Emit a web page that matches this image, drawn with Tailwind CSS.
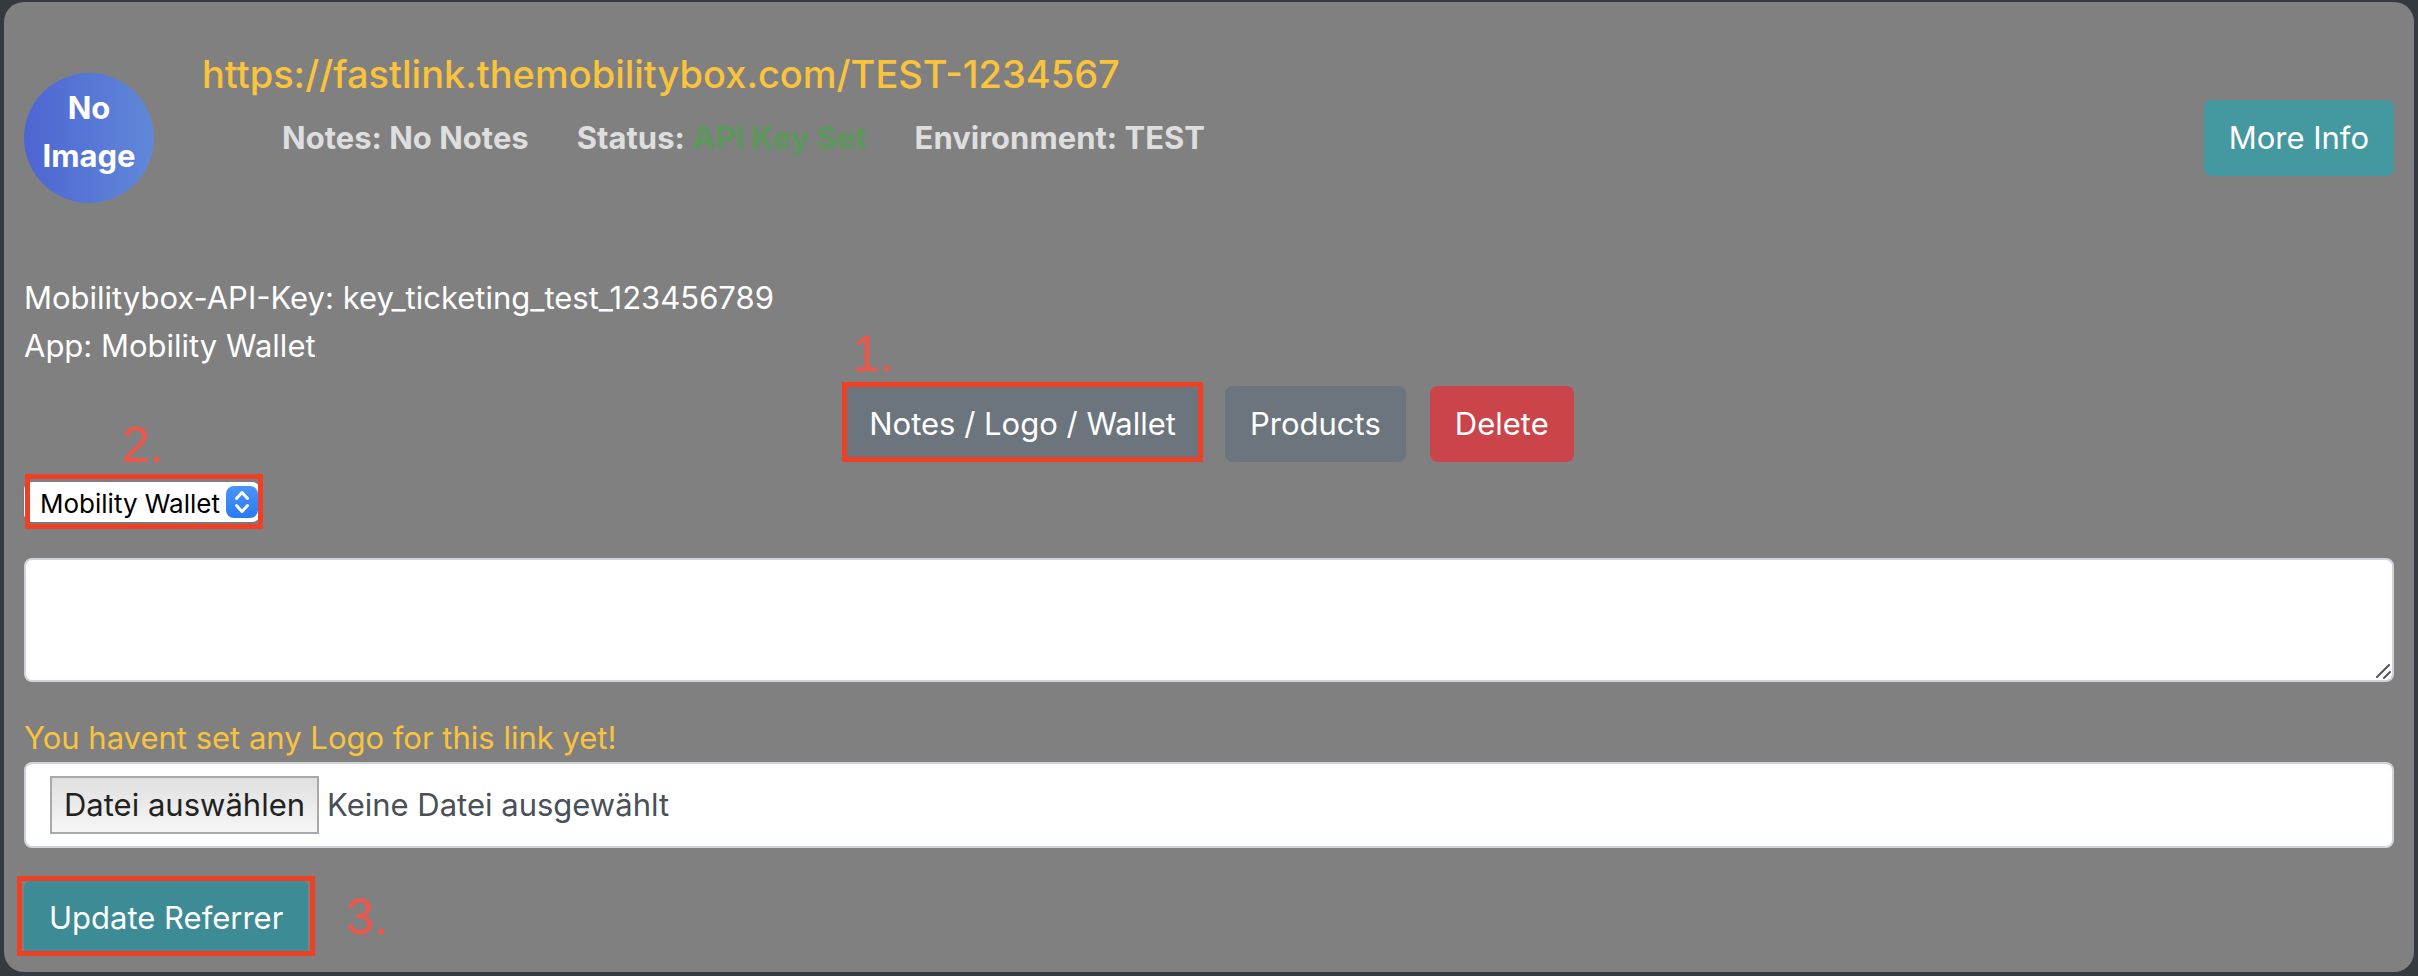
<!DOCTYPE html>
<html lang="de">
<head>
  <meta charset="utf-8">
  <meta name="viewport" content="width=device-width, initial-scale=1">
  <title>Fastlink Referrer</title>
  <script src="https://cdn.jsdelivr.net/npm/@tailwindcss/browser@4"></script>
</head>
<body class="bg-[#343a40] px-1 pt-[2px] pb-1 font-['Inter',sans-serif] text-[31px] leading-[48px] text-white">
  <main class="rounded-[20px] bg-[#808080] px-5 pt-5 pb-4">

    <header class="flex min-h-[232px] items-center">
      <div class="flex size-[130px] shrink-0 flex-col items-center justify-center rounded-full bg-linear-to-r from-[#4e65d2] to-[#6088d8] pb-3 text-center font-bold">
        <span>No</span>
        <span>Image</span>
      </div>
      <div class="ml-12 self-start pt-7">
        <h2 class="text-[38px] font-medium"><a href="#" class="text-[#fac33c]">https://fastlink.themobilitybox.com/TEST-1234567</a></h2>
        <div class="mt-4 ml-20 flex gap-12 font-bold text-[#dedede]">
          <span>Notes: No Notes</span>
          <span>Status: <span class="text-[#5b985b]">API Key Set</span></span>
          <span>Environment: TEST</span>
        </div>
      </div>
      <button type="button" class="ml-auto h-[76px] rounded-lg bg-[#4498a0] px-[25px]">More Info</button>
    </header>

    <section class="mt-5">
      <p>Mobilitybox-API-Key: key_ticketing_test_123456789</p>
      <p>App: Mobility Wallet</p>
    </section>

    <nav class="mt-4 flex justify-center gap-6">
      <div class="relative">
        <button type="button" class="h-[76px] rounded-lg bg-[#6c757d] px-[25px]">Notes / Logo / Wallet</button>
        <div class="pointer-events-none absolute -inset-x-[2px] -top-1 bottom-0 border-[5px] border-[#ee4025]"></div>
        <span class="absolute -top-[56px] left-2 font-['Liberation_Sans',sans-serif] text-[50px] text-[#f0554a]">1.</span>
      </div>
      <button type="button" class="h-[76px] rounded-lg bg-[#6c757d] px-[25px]">Products</button>
      <button type="button" class="h-[76px] rounded-lg bg-[#cb444a] px-[25px]">Delete</button>
    </nav>

    <form class="mt-5">
      <div class="relative w-fit">
        <select aria-label="App" class="block h-10 w-[236px] appearance-none rounded-lg bg-white pt-1 pl-4 text-[26px] leading-9 text-black shadow-sm">
          <option>Mobility Wallet</option>
        </select>
        <svg class="pointer-events-none absolute top-1 right-[2px] size-8" viewBox="0 0 32 32" fill="none">
          <defs>
            <linearGradient id="arrows" x1="0" y1="0" x2="0" y2="1">
              <stop stop-color="#4a95f8"/>
              <stop offset="1" stop-color="#2a7af6"/>
            </linearGradient>
          </defs>
          <rect width="32" height="32" rx="8" fill="url(#arrows)"/>
          <path d="M10.500 12.500L16 6.500l5.500 6M10.500 19.500l5.500 6 5.500-6" stroke="#fff" stroke-width="3" stroke-linecap="round" stroke-linejoin="round"/>
        </svg>
        <div class="pointer-events-none absolute -top-2 -right-[3px] -bottom-[7px] left-[1px] border-[5px] border-[#ee4025]"></div>
        <span class="absolute -top-[61px] left-[98px] font-['Liberation_Sans',sans-serif] text-[50px] text-[#f0554a]">2.</span>
      </div>

      <div class="relative mt-9">
        <textarea aria-label="Notes" class="block h-[124px] w-full resize-none rounded-lg border-2 border-[#ced4da] bg-white px-6 py-3 text-[#495057]"></textarea>
        <svg class="pointer-events-none absolute right-[3px] bottom-[3px] size-4" viewBox="0 0 16 16" stroke="#555" stroke-width="2" stroke-linecap="round">
          <path d="M2 14L14 2M9 15l6-6"/>
        </svg>
      </div>

      <p class="mt-8 text-[#fac33c]">You havent set any Logo for this link yet!</p>
      <div class="flex h-[86px] items-center rounded-lg border-2 border-[#ced4da] bg-white pl-6 text-[#495057]">
        <input type="file" id="logo" class="sr-only">
        <label for="logo" class="flex items-center gap-2">
          <span class="flex h-[58px] items-center border-2 border-[#a9a9a9] bg-linear-to-b from-[#e0e0e0] to-[#f6f6f6] px-3 text-[#222]">Datei auswählen</span>
          <span>Keine Datei ausgewählt</span>
        </label>
      </div>

      <div class="relative mt-8 w-fit">
        <button type="submit" class="block h-[76px] rounded-lg bg-[#3d8b94] px-[25px]">Update Referrer</button>
        <div class="pointer-events-none absolute -inset-x-[7px] -top-1 bottom-0 border-[5px] border-[#ee4025]"></div>
        <span class="absolute top-[13px] left-full ml-[38px] font-['Liberation_Sans',sans-serif] text-[50px] text-[#f0554a]">3.</span>
      </div>
    </form>
  </main>
</body>
</html>
